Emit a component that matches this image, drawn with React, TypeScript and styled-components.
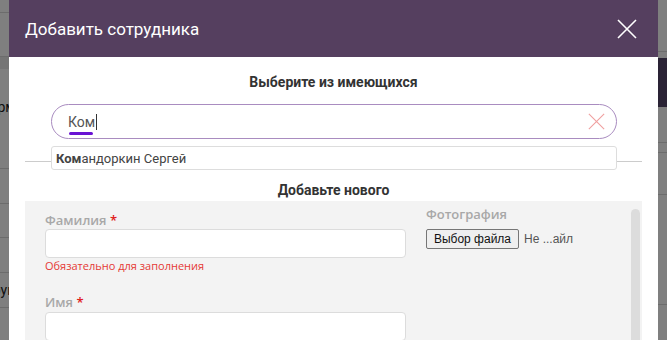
import React from "react";
import styled, { createGlobalStyle } from "styled-components";

const GlobalStyle = createGlobalStyle`
  html, body {
    margin: 0;
    padding: 0;
    width: 667px;
    height: 340px;
    overflow: hidden;
    font-family: Roboto, "Liberation Sans", Arial, sans-serif;
  }
`;

// --- page behind the dialog ---
const Page = styled.div`
  position: relative;
  width: 667px;
  height: 340px;
  display: flex;
  justify-content: space-between;
  background: #fff;
`;

const BgCol = styled.div<{ $w: number }>`
  width: ${(p) => p.$w}px;
  display: flex;
  flex-direction: column;
  overflow: hidden;
`;

const BgRow = styled.div<{ $h: number; $bg?: string; $line?: boolean; $top?: number }>`
  height: ${(p) => p.$h}px;
  flex: none;
  background: ${(p) => p.$bg || "#fff"};
  border-bottom: ${(p) => (p.$line ? "1px solid #d8d8d8" : "none")};
  box-sizing: border-box;
  display: flex;
  align-items: ${(p) => (p.$top !== undefined ? "flex-start" : "center")};
  padding-top: ${(p) => p.$top || 0}px;
  justify-content: flex-end;
  font-size: 14px;
  line-height: 16px;
  color: #222;
  white-space: nowrap;
`;

const BgRowStart = styled(BgRow)`
  justify-content: flex-start;
  padding-left: 2px;
`;

const Backdrop = styled.div`
  position: absolute;
  inset: 0;
  background: rgba(0, 0, 0, 0.5);
`;

// --- dialog ---
const Modal = styled.div`
  position: absolute;
  left: 9px;
  top: 0;
  width: 649px;
  height: 420px;
  background: #fff;
  display: flex;
  flex-direction: column;
`;

const Header = styled.div`
  height: 57px;
  flex: none;
  background: #553f5f;
  display: flex;
  align-items: center;
  justify-content: space-between;
  padding: 0 21px 0 16px;
  box-sizing: border-box;
`;

const Title = styled.div`
  color: #fff;
  font-size: 17px;
  font-family: Roboto, sans-serif;
`;

const CloseBtn = styled.button`
  width: 20px;
  height: 20px;
  padding: 0;
  border: none;
  background: none;
  display: flex;
`;

const Body = styled.div`
  padding: 15px 16px 0;
  display: flex;
  flex-direction: column;
`;

const SectionTitle = styled.div`
  text-align: center;
  font-size: 14px;
  line-height: 20px;
  font-weight: 700;
  color: #333;
`;

const SearchWrap = styled.div`
  position: relative;
  margin: 12px 25px 0 26px;
`;

const Search = styled.div`
  height: 35px;
  box-sizing: border-box;
  border: 1px solid #a98cc0;
  border-radius: 18px;
  display: flex;
  align-items: center;
  justify-content: space-between;
  padding: 0 10px 0 16px;
`;

const SearchText = styled.span`
  position: relative;
  font-size: 14px;
  color: #555;
  display: flex;
  align-items: center;
`;

const Caret = styled.span`
  width: 1px;
  height: 16px;
  background: #333;
  margin-left: 1px;
`;

const Squiggle = styled.span`
  position: absolute;
  left: 1px;
  top: 18px;
  width: 24px;
  height: 3px;
  border-radius: 2px;
  background: #6a12d4;
`;

const ClearBtn = styled.span`
  width: 18px;
  height: 18px;
  display: flex;
`;

const Dropdown = styled.div`
  position: absolute;
  left: 0;
  right: 0;
  top: 42px;
  height: 24px;
  box-sizing: border-box;
  border: 1px solid #ddd;
  border-radius: 3px;
  background: #fff;
  padding: 0 4px;
  display: flex;
  align-items: center;
  font-size: 13px;
  color: #444;
  z-index: 2;
`;

const Divider = styled.hr`
  margin: 22px 0 0;
  border: none;
  border-top: 1px solid #ccc;
  height: 0;
`;

const SubTitle = styled(SectionTitle)`
  margin-top: 18px;
`;

const Panel = styled.div`
  position: relative;
  margin-top: 1px;
  background: #f3f3f3;
  height: 200px;
  overflow: hidden;
  padding: 4px 0 0 20px;
  box-sizing: border-box;
`;

const ScrollThumb = styled.div`
  position: absolute;
  right: 2px;
  top: 8px;
  bottom: 0;
  width: 9px;
  border-radius: 5px 5px 0 0;
  background: #dcdcdc;
`;

const Grid = styled.div`
  display: flex;
  gap: 20px;
`;

const Col = styled.div<{ $w?: number; $pt?: number }>`
  width: ${(p) => (p.$w ? `${p.$w}px` : "auto")};
  padding-top: ${(p) => p.$pt || 0}px;
  display: flex;
  flex-direction: column;
`;

const Label = styled.label<{ $mt?: number }>`
  font-family: "Open Sans", sans-serif;
  font-size: 13px;
  line-height: 18px;
  font-weight: 600;
  color: #a8a8a8;
  margin-top: ${(p) => p.$mt || 0}px;
`;

const Star = styled.span`
  color: #e02020;
`;

const TextInput = styled.div<{ $mt?: number }>`
  height: 29px;
  margin-top: ${(p) => p.$mt || 0}px;
  box-sizing: border-box;
  background: #fff;
  border: 1px solid #dcdcdc;
  border-radius: 4px;
`;

const ErrorText = styled.div`
  font-family: "Open Sans", sans-serif;
  font-size: 11px;
  line-height: 14px;
  color: #e53935;
  margin-top: 1px;
`;

const FileRow = styled.div`
  display: flex;
  align-items: center;
  gap: 5px;
  margin-top: 6px;
  font-family: "Liberation Sans", Arial, sans-serif;
  font-size: 12px;
  color: #555;
`;

const FileButton = styled.button`
  height: 20px;
  width: 93px;
  padding: 0;
  background: #efefef;
  border: 1px solid #767676;
  border-radius: 2px;
  font-family: "Liberation Sans", Arial, sans-serif;
  font-size: 12px;
  color: #111;
`;

const XIcon = ({ color, size, sw }: { color: string; size: number; sw: number }) => (
  <svg width={size} height={size} viewBox="0 0 20 20">
    <path d="M1 1 L19 19 M19 1 L1 19" stroke={color} strokeWidth={sw} fill="none" />
  </svg>
);

export default function App() {
  return (
    <>
      <GlobalStyle />
      <Page>
        <BgCol $w={30}>
          <BgRow $h={13} $line />
          <BgRow $h={44} $line style={{ color: "#ccc" }}>
            Те
          </BgRow>
          <BgRow $h={12} $bg="#eaeaea" />
          <BgRow $h={100} $line $top={30}>
            Формат
          </BgRow>
          <BgRow $h={35} $line />
          <BgRow $h={34} $line />
          <BgRow $h={35} $line />
          <BgRow $h={35} $line>
            Группу
          </BgRow>
          <BgRow $h={35} $line />
        </BgCol>
        <BgCol $w={30}>
          <BgRowStart $h={52} $line />
          <BgRowStart $h={6} />
          <BgRowStart $h={49} $bg="#54466a" />
          <BgRowStart $h={36} $line />
          <BgRowStart $h={10} $line />
          <BgRowStart $h={42} $line style={{ color: "#bbb" }}>
            п
          </BgRowStart>
          <BgRowStart $h={110} $line />
        </BgCol>
        <Backdrop />
        <Modal>
          <Header>
            <Title>Добавить сотрудника</Title>
            <CloseBtn>
              <XIcon color="#fff" size={20} sw={1.6} />
            </CloseBtn>
          </Header>
          <Body>
            <SectionTitle>Выберите из имеющихся</SectionTitle>
            <SearchWrap>
              <Search>
                <SearchText>
                  Ком
                  <Caret />
                  <Squiggle />
                </SearchText>
                <ClearBtn>
                  <XIcon color="#f0a0a0" size={17} sw={1.3} />
                </ClearBtn>
              </Search>
              <Dropdown>
                <b>Ком</b>андоркин Сергей
              </Dropdown>
            </SearchWrap>
            <Divider />
            <SubTitle>Добавьте нового</SubTitle>
            <Panel>
              <Grid>
                <Col $w={361} $pt={6}>
                  <Label>
                    Фамилия <Star>*</Star>
                  </Label>
                  <TextInput />
                  <ErrorText>Обязательно для заполнения</ErrorText>
                  <Label $mt={20}>
                    Имя <Star>*</Star>
                  </Label>
                  <TextInput $mt={1} />
                </Col>
                <Col>
                  <Label>Фотография</Label>
                  <FileRow>
                    <FileButton>Выбор файла</FileButton>
                    <span>Не ...айл</span>
                  </FileRow>
                </Col>
              </Grid>
              <ScrollThumb />
            </Panel>
          </Body>
        </Modal>
      </Page>
    </>
  );
}
